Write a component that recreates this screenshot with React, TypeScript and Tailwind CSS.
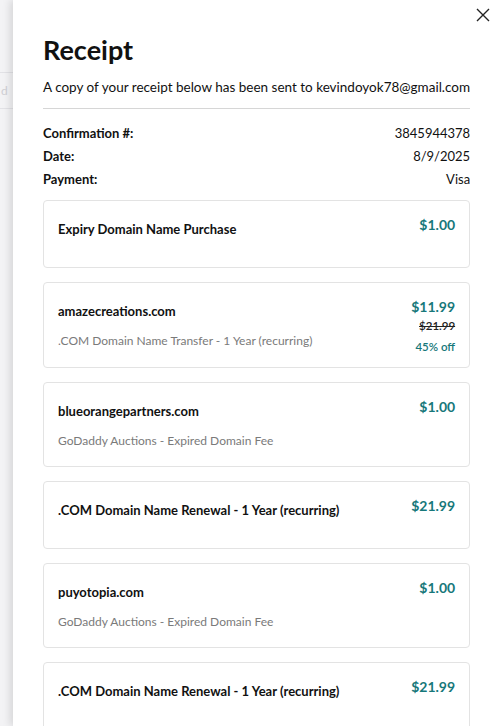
import React from 'react';

type Item = {
    title: string;
    desc?: string;
    price: string;
    oldPrice?: string;
    discount?: string;
};

const items: Item[] = [
    { title: 'Expiry Domain Name Purchase', price: '$1.00' },
    {
        title: 'amazecreations.com',
        desc: '.COM Domain Name Transfer - 1 Year (recurring)',
        price: '$11.99',
        oldPrice: '$21.99',
        discount: '45% off',
    },
    { title: 'blueorangepartners.com', desc: 'GoDaddy Auctions - Expired Domain Fee', price: '$1.00' },
    { title: '.COM Domain Name Renewal - 1 Year (recurring)', price: '$21.99' },
    { title: 'puyotopia.com', desc: 'GoDaddy Auctions - Expired Domain Fee', price: '$1.00' },
    { title: '.COM Domain Name Renewal - 1 Year (recurring)', price: '$21.99' },
];

const details = [
    ['Confirmation #:', '3845944378'],
    ['Date:', '8/9/2025'],
    ['Payment:', 'Visa'],
];

const LineItem: React.FC<{ item: Item }> = ({ item }) => (
    <div className="flex justify-between shrink-0 border border-[#e3e3e3] rounded-[4px] pl-[14px] pr-[14px] pt-[15px] pb-[12px] min-h-[68px]">
        <div className="flex flex-col">
            <div className="text-[13px] leading-[18px] font-bold text-[#111] mt-[4px]">{item.title}</div>
            {item.desc && <div className="text-[12px] leading-[16px] text-[#7a7a7a] mt-[13px] mb-[5px]">{item.desc}</div>}
        </div>
        <div className="flex flex-col items-end shrink-0">
            <div className="text-[14px] leading-[18px] font-bold text-[#17787a]">{item.price}</div>
            {item.oldPrice && <div className="text-[11.5px] leading-[16px] font-semibold text-[#222] line-through mt-[2px]">{item.oldPrice}</div>}
            {item.discount && <div className="text-[11.5px] leading-[16px] font-semibold text-[#17787a] mt-[5px]">{item.discount}</div>}
        </div>
    </div>
);

export default function App() {
    return (
        <div className="flex h-[726px] overflow-hidden bg-white" style={{ fontFamily: 'Lato, "Open Sans", sans-serif' }}>
            {/* page behind the drawer */}
            <div className="w-[13px] shrink-0 bg-[#f3f3f5] flex flex-col overflow-hidden">
                <div className="h-[72px]" />
                <div className="border-t border-[#e2e2e6] h-[36px] flex items-center text-[12px] text-[#cfcfd4] whitespace-nowrap pl-[1px]">d</div>
                <div className="border-t border-[#e2e2e6]" />
            </div>

            <div className="relative flex-1 flex flex-col bg-white shadow-[-3px_0_8px_rgba(0,0,0,0.12)] px-[30px] pt-[32px]">
                <button className="absolute right-[10px] top-[8px] text-[#222]">
                    <svg width="14" height="14" viewBox="0 0 14 14" fill="none" stroke="currentColor" strokeWidth="1.4">
                        <path d="M1 1L13 13M13 1L1 13" />
                    </svg>
                </button>

                <h1 className="text-[27px] font-bold text-[#111] leading-[36px]">Receipt</h1>
                <p className="text-[13.5px] text-[#111] mt-[9px] pb-[11px] border-b border-[#d6d6d6] whitespace-nowrap">
                    A copy of your receipt below has been sent to kevindoyok78@gmail.com
                </p>

                <div className="mt-[15px] flex flex-col gap-[5px]">
                    {details.map(([k, v]) => (
                        <div key={k} className="flex justify-between text-[13px] leading-[18px]">
                            <span className="font-bold text-[#111]">{k}</span>
                            <span className="text-[#111]">{v}</span>
                        </div>
                    ))}
                </div>

                <div className="mt-[12px] flex flex-col gap-[14px]">
                    {items.map((item, i) => (
                        <LineItem key={i} item={item} />
                    ))}
                </div>
            </div>

            <div className="w-[3px] shrink-0 bg-[#dcdcdc]" />
        </div>
    );
}
